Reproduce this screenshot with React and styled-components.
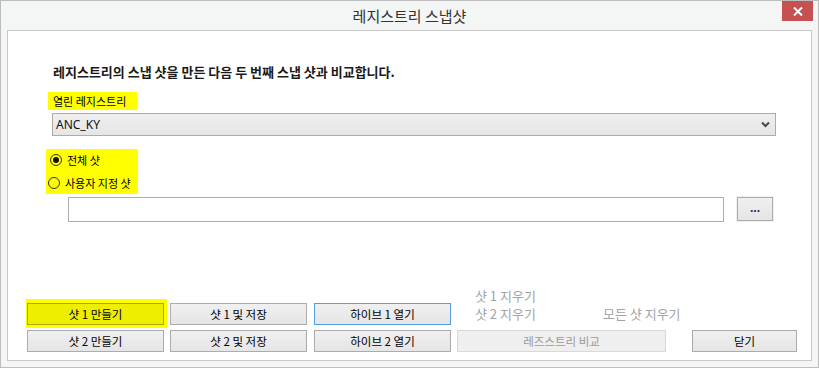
import React from 'react'
import styled, { createGlobalStyle } from 'styled-components'

const GlobalStyle = createGlobalStyle`
  html, body {
    margin: 0;
    padding: 0;
    overflow: hidden;
    background: #f4f5f5;
  }
  * {
    box-sizing: border-box;
  }
`

const KR = `'Noto Sans CJK KR', 'Noto Sans', sans-serif`

function CloseGlyph() {
  return (
    <svg width="10" height="9" viewBox="0 0 10 9">
      <path d="M1 0.5 L9 8.5 M9 0.5 L1 8.5" stroke="#fff" strokeWidth="2" />
    </svg>
  )
}

function Chevron() {
  return (
    <svg width="9" height="7" viewBox="0 0 9 7">
      <path d="M1 1.5 L4.5 5 L8 1.5" stroke="#4a4a4a" strokeWidth="2" fill="none" />
    </svg>
  )
}

function RadioOption({ checked, indent, children }) {
  return (
    <RadioRow $indent={indent}>
      <RadioCircle $checked={checked} />
      <span>{children}</span>
    </RadioRow>
  )
}

export default function App() {
  return (
    <>
      <GlobalStyle />
      <Window>
        <TitleBar>
          <span />
          <Title>레지스트리 스냅샷</Title>
          <CloseButton aria-label="close">
            <CloseGlyph />
          </CloseButton>
        </TitleBar>

        <Panel>
          <Heading>레지스트리의 스냅 샷을 만든 다음 두 번째 스냅 샷과 비교합니다.</Heading>

          <Highlight>열린 레지스트리</Highlight>
          <Select>
            <span>ANC_KY</span>
            <Chevron />
          </Select>

          <RadioGroup>
            <RadioOption checked indent={4}>전체 샷</RadioOption>
            <RadioOption indent={2}>사용자 지정 샷</RadioOption>
          </RadioGroup>

          <PathRow>
            <PathInput />
            <BrowseButton>...</BrowseButton>
          </PathRow>

          <Actions>
            <Column>
              <YellowSpot>
                <Button $yellow>샷 1 만들기</Button>
              </YellowSpot>
              <Button>샷 2 만들기</Button>
            </Column>
            <Column>
              <Button>샷 1 및 저장</Button>
              <Button>샷 2 및 저장</Button>
            </Column>
            <Column $shift={1}>
              <Button $focused>하이브 1 열기</Button>
              <Button>하이브 2 열기</Button>
            </Column>
            <Column $width={209}>
              <Links>
                <LinkText>샷 1 지우기</LinkText>
                <span />
                <LinkText>샷 2 지우기</LinkText>
                <LinkText>모든 샷 지우기</LinkText>
              </Links>
              <Button disabled>레즈스트리 비교</Button>
            </Column>
            <Column $width={105} $shift={20}>
              <Button>닫기</Button>
            </Column>
          </Actions>
        </Panel>
      </Window>
    </>
  )
}

const Window = styled.div`
  width: 819px;
  height: 368px;
  border: 1px solid #bdbdbd;
  background: #f4f5f5;
  display: flex;
  flex-direction: column;
  padding-bottom: 6px;
`

const TitleBar = styled.div`
  height: 29px;
  flex: none;
  display: grid;
  grid-template-columns: 1fr auto 1fr;
  align-items: start;
`

const Title = styled.div`
  font-family: ${KR};
  font-size: 15px;
  line-height: 29px;
  color: #333;
  white-space: nowrap;
`

const CloseButton = styled.button`
  justify-self: end;
  width: 31px;
  height: 20px;
  margin-right: 5px;
  border: none;
  padding: 0;
  background: #c75050;
  display: flex;
  align-items: center;
  justify-content: center;
`

const Panel = styled.div`
  flex: 1;
  margin: 0 6px;
  border: 1px solid #c9c9c9;
  background: #fff;
  display: flex;
  flex-direction: column;
  align-items: flex-start;
  font-family: ${KR};
  font-size: 11px;
  color: #000;
`

const Heading = styled.div`
  margin: 32px 0 0 45px;
  font-size: 13px;
  font-weight: bold;
  line-height: 17px;
  color: #1a1a1a;
  white-space: nowrap;
`

const Highlight = styled.div`
  margin: 12px 0 0 40px;
  width: 89px;
  height: 18px;
  line-height: 18px;
  padding-left: 5px;
  background: #ffff00;
  white-space: nowrap;
`

const Select = styled.div`
  margin: 3px 0 0 44px;
  width: 724px;
  height: 23px;
  border: 1px solid #acacac;
  background: linear-gradient(#f0f0f0, #e5e5e5);
  display: flex;
  align-items: center;
  justify-content: space-between;
  padding: 0 5px 0 3px;
  font-family: 'Noto Sans', sans-serif;
  font-size: 12px;
  color: #111;
`

const RadioGroup = styled.div`
  margin: 13px 0 0 38px;
  width: 92px;
  height: 45px;
  background: #ffff00;
  display: flex;
  flex-direction: column;
  justify-content: space-between;
  padding: 1px 0;
`

const RadioRow = styled.label`
  height: 20px;
  display: flex;
  align-items: center;
  gap: 5px;
  padding-left: ${p => p.$indent}px;
  white-space: nowrap;
`

const RadioCircle = styled.span`
  position: relative;
  width: 12px;
  height: 12px;
  flex: none;
  border-radius: 50%;
  border: 1px solid #333;
  &::after {
    content: '';
    display: ${p => (p.$checked ? 'block' : 'none')};
    position: absolute;
    inset: 2px;
    border-radius: 50%;
    background: #111;
  }
`

const PathRow = styled.div`
  margin: 3px 0 0 60px;
  display: flex;
  align-items: flex-start;
  gap: 13px;
`

const PathInput = styled.div`
  width: 656px;
  height: 25px;
  border: 1px solid #abadb3;
  background: #fff;
`

const BrowseButton = styled.div`
  width: 36px;
  height: 24px;
  border: 1px solid #acacac;
  box-shadow: 0 0 0 1px #f0f0f0;
  background: linear-gradient(#f0f0f0, #e5e5e5);
  display: flex;
  align-items: center;
  justify-content: center;
  font-family: 'Noto Sans', sans-serif;
  font-size: 12px;
  font-weight: bold;
  color: #1c2c4c;
  padding-bottom: 4px;
`

const Actions = styled.div`
  margin: auto 0 0 19px;
  padding-bottom: 8px;
  display: flex;
  align-items: flex-end;
  gap: 6px;
`

const Column = styled.div`
  width: ${p => p.$width || 137}px;
  margin-left: ${p => p.$shift || 0}px;
  display: flex;
  flex-direction: column;
  gap: 5px;
`

const YellowSpot = styled.div`
  position: relative;
  z-index: 0;
  &::before {
    content: '';
    position: absolute;
    z-index: -1;
    top: -4px;
    bottom: -3px;
    left: -1px;
    right: -3px;
    background: #ffff00;
  }
`

const Button = styled.button`
  width: 100%;
  height: 22px;
  padding: 0;
  border: 1px solid ${p => (p.$yellow ? '#a8a800' : p.$focused ? '#569de5' : p.disabled ? '#d9d9d9' : '#acacac')};
  background: ${p =>
    p.$yellow ? '#eeee00' : p.disabled ? '#efefef' : 'linear-gradient(#f0f0f0, #e5e5e5)'};
  font-family: ${KR};
  font-size: 11.5px;
  color: ${p => (p.disabled ? '#9a9a9a' : '#000')};
  white-space: nowrap;
  display: block;
`

const Links = styled.div`
  display: grid;
  grid-template-columns: 128px auto;
  grid-auto-rows: 18px;
  align-items: center;
  padding-left: 18px;
  margin-bottom: 3px;
`

const LinkText = styled.span`
  font-size: 13px;
  color: #a3a3a3;
  white-space: nowrap;
`
